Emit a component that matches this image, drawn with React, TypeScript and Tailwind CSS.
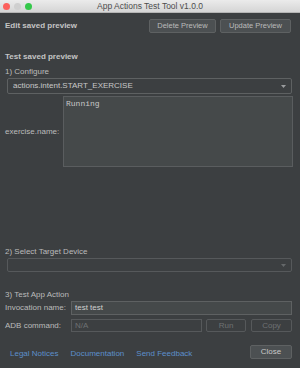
import React from "react";

const Caret = ({ dim }: { dim?: boolean }) => (
  <svg width="5" height="3" viewBox="0 0 5 3" className="shrink-0">
    <path d="M0 0 L5 0 L2.5 3 Z" fill={dim ? "#65686a" : "#9a9c9e"} />
  </svg>
);

export default function App() {
  return (
    <div
      className="w-[300px] h-[368px] bg-[#3c3f41] text-[#bbbbbb] flex flex-col overflow-hidden text-[8px]"
      style={{ fontFamily: '"Liberation Sans", Arial, sans-serif' }}
    >
      {/* Title bar */}
      <div className="h-[13px] shrink-0 relative flex items-center justify-center bg-gradient-to-b from-[#ebebeb] to-[#d5d5d5] border-b border-[#b5b5b5]">
        <div className="absolute left-[3px] top-[2.5px] flex gap-[4px]">
          <span className="w-[7px] h-[7px] rounded-full bg-[#fc605c]" />
          <span className="w-[7px] h-[7px] rounded-full bg-[#cfcfcf]" />
          <span className="w-[7px] h-[7px] rounded-full bg-[#34c84a]" />
        </div>
        <span className="text-[#4d4d4d] text-[8.5px] leading-none">App Actions Test Tool v1.0.0</span>
      </div>

      {/* Header row */}
      <div className="mt-[6px] h-[14px] flex items-center justify-between pl-[5px] pr-[9px]">
        <span className="font-bold text-[#c5c5c5]">Edit saved preview</span>
        <div className="flex gap-[4px] text-[7.5px]">
          <div className="w-[67px] h-[14px] flex items-center justify-center bg-[#4c5052] border border-[#5e6162] rounded-[2px]">Delete Preview</div>
          <div className="w-[71px] h-[14px] flex items-center justify-center bg-[#4c5052] border border-[#5e6162] rounded-[2px]">Update Preview</div>
        </div>
      </div>

      <div className="mt-[19px] h-[10px] leading-[10px] pl-[5px] font-bold text-[#c5c5c5]">Test saved preview</div>
      <div className="mt-[5px] h-[10px] leading-[10px] pl-[5px]">1) Configure</div>

      <div className="mt-[1px] ml-[7px] mr-[8px] h-[16px] flex items-center justify-between pl-[5px] pr-[5px] bg-[#3c3f41] border border-[#5e6162] rounded-[2px] text-[#c8c8c8]">
        <span>actions.intent.START_EXERCISE</span>
        <Caret />
      </div>

      <div className="mt-[2px] h-[71px] flex items-center pl-[5px] pr-[7px]">
        <span className="w-[58px] shrink-0">exercise.name:</span>
        <div
          className="flex-1 h-full bg-[#45494a] border border-[#5a5d5f] px-[2px] pt-[1px] text-[8px] text-[#c8c8c8]"
          style={{ fontFamily: '"Liberation Mono", "DejaVu Sans Mono", monospace' }}
        >
          Running
        </div>
      </div>

      <div className="mt-[80px] h-[10px] leading-[10px] pl-[5px]">2) Select Target Device</div>
      <div className="mt-[1px] ml-[7px] mr-[8px] h-[14px] flex items-center justify-end pr-[5px] border border-[#56595b] rounded-[2px]">
        <Caret dim />
      </div>

      <div className="mt-[18px] h-[10px] leading-[10px] pl-[5px]">3) Test App Action</div>

      <div className="mt-[1px] h-[14px] flex items-center pl-[5px] pr-[8px]">
        <span className="w-[66px] shrink-0">Invocation name:</span>
        <div className="flex-1 h-full flex items-center px-[3px] bg-[#45494a] border border-[#5e6162] text-[#d0d0d0]">test test</div>
      </div>

      <div className="mt-[4px] h-[13px] flex items-center pl-[5px] pr-[8px]">
        <span className="w-[66px] shrink-0">ADB command:</span>
        <div className="w-[131px] h-full flex items-center px-[3px] border border-[#56595b] text-[#6e7173]">N/A</div>
        <div className="ml-[4px] w-[40px] h-full flex items-center justify-center border border-[#56595b] rounded-[2px] text-[#6e7173]">Run</div>
        <div className="ml-[5px] w-[41px] h-full flex items-center justify-center border border-[#56595b] rounded-[2px] text-[#6e7173]">Copy</div>
      </div>

      <div className="mt-[13px] h-[14px] flex items-start pl-[10px] pr-[8px]">
        <div className="flex gap-[12px] pt-[5px] text-[#5c8fcb] leading-none">
          <span>Legal Notices</span>
          <span>Documentation</span>
          <span>Send Feedback</span>
        </div>
        <div className="ml-auto w-[42px] h-[14px] flex items-center justify-center bg-[#4c5052] border border-[#5e6162] rounded-[2px] text-[#c8c8c8]">Close</div>
      </div>
    </div>
  );
}
